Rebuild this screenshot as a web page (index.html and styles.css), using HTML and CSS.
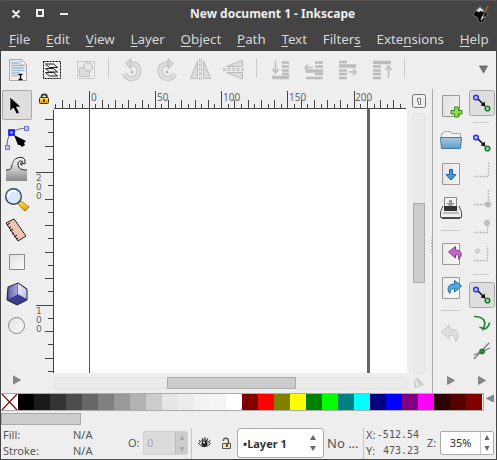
FILE: index.html
```html
<!DOCTYPE html>
<html lang="en">
<head>
<meta charset="utf-8">
<title>New document 1 - Inkscape</title>
<link rel="stylesheet" href="styles.css">
</head>
<body>
<svg class="defs" width="0" height="0" aria-hidden="true">
  <defs>
    <linearGradient id="paper" x1="0" y1="0" x2="1" y2="1"><stop offset="0" stop-color="#e2e2e2"/><stop offset="1" stop-color="#fafafa"/></linearGradient>
    <linearGradient id="gold" x1="0" y1="0" x2="0" y2="1"><stop offset="0" stop-color="#fff05a"/><stop offset="1" stop-color="#e88a00"/></linearGradient>
    <linearGradient id="blue" x1="0" y1="0" x2="0" y2="1"><stop offset="0" stop-color="#a8cae4"/><stop offset="1" stop-color="#649cc6"/></linearGradient>
    <linearGradient id="sea" x1="0" y1="0" x2="0" y2="1"><stop offset="0" stop-color="#eee"/><stop offset=".3" stop-color="#ddd"/><stop offset="1" stop-color="#888"/></linearGradient>
    <linearGradient id="cube" x1="0" y1="0" x2="1" y2="0"><stop offset="0" stop-color="#6468a8"/><stop offset="1" stop-color="#a8aadc"/></linearGradient>
    <linearGradient id="cube-side" x1="0" y1="0" x2="1" y2="1"><stop offset="0" stop-color="#f0f0ff"/><stop offset="1" stop-color="#b8bae8"/></linearGradient>
    <symbol id="snap" viewBox="0 0 20 20">
      <path d="M6 6l6 6" stroke="#111" stroke-width="1.6"/><path d="M13.500 13.500l-5-1 4-4z" fill="#111"/>
      <circle cx="4" cy="4.500" r="2.300" fill="#c4c4ff" stroke="#3434ee" stroke-width="1.600"/>
      <circle cx="15.500" cy="15.500" r="2.300" fill="#a4d8ae" stroke="#168030" stroke-width="1.600"/>
    </symbol>
    <symbol id="rot" viewBox="0 0 22 24">
      <path d="M8 6c6-1 9 2.500 9 7s-3 7.500-7.500 7.500-6-2-7-5" fill="none" stroke="#bcbcbc" stroke-width="5"/>
      <path d="M8 6c6-1 9 2.500 9 7s-3 7.500-7.500 7.500-6-2-7-5" fill="none" stroke="#dedede" stroke-width="3.400"/>
      <path d="M9 .5v10.500L3.500 5.500z" fill="#d8d8d8" stroke="#bcbcbc"/><circle cx="10" cy="14" r="1.500" fill="#bbb"/>
    </symbol>
  </defs>
</svg>
<div class="window">
  <header class="titlebar">
    <svg width="70" height="26" class="controls"><path d="M11.500 9.500l7 7m0-7l-7 7M36 9h6v6h-6z" fill="none" stroke="#eee" stroke-width="2"/><path d="M59 13h8" stroke="#eee" stroke-width="2"/></svg>
    <h1>New document 1 - Inkscape</h1>
    <svg width="18" height="20" class="logo"><path d="M8 2l7 7 1 2-4 2 1 3-4 3-4-3 1-2-5-3 1-2z" fill="#080808" stroke="#888" stroke-width=".7"/><path d="M8 3L4 7l3 1 2-1 2 1 1-1z" fill="#ddd"/><path d="M16 2l-4 8-3 6" stroke="#995d24" stroke-width="1.500" fill="none"/><path d="M10 12l-1 5 3-4z" fill="#ddd"/></svg>
  </header>
  <nav class="menubar"><span><u>F</u>ile</span><span><u>E</u>dit</span><span><u>V</u>iew</span><span><u>L</u>ayer</span><span><u>O</u>bject</span><span><u>P</u>ath</span><span><u>T</u>ext</span><span>Filter<u>s</u></span><span>Exte<u>n</u>sions</span><span><u>H</u>elp</span></nav>
  <section class="toolbar">
    <svg width="495" height="37">
      <path d="M8.500 8.500h12l5 5v16h-17z" fill="url(#paper)" stroke="#aaa"/><path d="M20 9v5h5" fill="#fff" stroke="#a8b5bf"/><path d="M10.500 12h8M10.500 14.500h12M10.500 17h13M10.500 19.500h13M10.500 22h8M10.500 24.500h7" stroke="#9fbad2" stroke-width="1.500"/><path d="M17.500 23.500h4M19.500 23.500v5M17.500 28.500h4" stroke="#000" stroke-width="1.300"/>
      <rect x="42.500" y="10.500" width="17" height="17" fill="none" stroke="#000" stroke-dasharray="2 1"/>
      <g fill="#eee" stroke="#222"><path d="M44.500 21.500h8l4 3.500h-8z"/><path d="M44.500 17.500h8l4 3.500h-8z"/><path d="M44.500 13h8l4 3.500h-8z"/></g>
      <rect x="76.500" y="10.500" width="17" height="17" fill="none" stroke="#bbb" stroke-dasharray="2 1"/><path d="M78.500 16.500h10v9h-10z" fill="#ddd" stroke="#c2c2c2"/><circle cx="87" cy="16" r="4.500" fill="#e4e4e4" stroke="#bbb"/>
      <path d="M107.500 7v20M255.500 7v20M403.500 7v20" stroke="#ccc"/>
      <use href="#rot" x="121" y="7" width="22" height="24"/>
      <g transform="translate(176 7) scale(-1 1)"><use href="#rot" width="22" height="24"/></g>
      <path d="M196.500 10v17.500h-7zM202.500 10v17.500h7z" fill="#ddd" stroke="#bbb"/><path d="M199.500 8v22" stroke="#b0b0b0" stroke-width="2.500" stroke-dasharray="3 1.500"/><path d="M199.500 8v22" stroke="#ddd" stroke-dasharray="3 1.500"/>
      <path d="M241.500 9v6.500h-16zM241.500 28v-6.500h-16z" fill="#ddd" stroke="#bbb"/><path d="M222 18.500h22" stroke="#b0b0b0" stroke-width="2.500" stroke-dasharray="3 1.500"/><path d="M222 18.500h22" stroke="#ddd" stroke-dasharray="3 1.500"/>
      <g fill="none" stroke="#bcbcbc" stroke-width="2.400">
        <path d="M281 11.500h7M281 15.500h7M281 19.500h7M281 23h7"/><path d="M271 26.500h17" stroke-width="3.500"/><path d="M274.500 10v11m-3-3l3 4 3-4" stroke-width="1.500"/>
        <path d="M314 11.500h8M314 15.500h8M314 23h8M305 27h17"/><path d="M304.500 20h17.500" stroke-width="3.500"/><path d="M312 16.500h-8m3-3l-3 3 3 3" stroke-width="1.500"/>
        <path d="M338 11h8M338 19.500h8M338 23h8M338 27h8"/><path d="M338 15h17" stroke-width="3.500"/><path d="M348 21h7m-3-3l3 3-3 3" stroke-width="1.500"/>
        <path d="M372 15.500h8M372 19.500h8M372 23h8M372 27h8"/><path d="M372 11.500h18" stroke-width="3.500"/><path d="M387.500 27V15m-3 4l3-4 3 4" stroke-width="1.500"/>
      </g>
      <path d="M478.500 15h8l-4 7z" fill="#777" stroke="#555" stroke-width=".7"/>
    </svg>
  </section>
  <main class="workspace">
    <aside class="toolbox">
      <button class="active"><svg viewBox="0 0 30 30"><path d="M10 7v14l3.500-3 3 6 3-1-3-6h4.500z" fill="#000" stroke="#fff" stroke-width=".6"/></svg></button>
      <button><svg viewBox="0 0 30 30"><path d="M7 25C7 14 12 8 26 7" fill="none" stroke="#666"/><g fill="#c8c8ff" stroke="#6668ea"><path d="M5.500 24.500h4v4h-4zM24.500 5.500h4v4h-4z"/><path d="M9 9h5v5H9z" fill="#7878ff" stroke="#0000dc" stroke-width="1.500"/></g><path d="M14 14l12 6-2 2 1 2-3 2-2-2-2 0z" fill="#000"/></svg></button>
      <button><svg viewBox="0 0 30 30"><path d="M6 28V17c7 0 5-4 7-8 3-5 10-5 12 0-3-2-7-2-7 2 0 5 4 6 9 6v11z" fill="url(#sea)"/><path d="M6 17c7 0 5-4 7-8 3-6 12-6 12-1v3l-3-1v2h-1c-1-2 1-4 2-3-2-2-5-1-5 2 0 5 4 6 9 6" fill="none" stroke="#222"/><path d="M10 14c2-1 2-5 5-7" fill="none" stroke="#aaa"/></svg></button>
      <button><svg viewBox="0 0 30 30"><path d="M21 17l8 6-4 4-7-7z" fill="url(#gold)" stroke="#b88000"/><circle cx="13.500" cy="12.500" r="7.800" fill="#d7e9fb" stroke="#36485d" stroke-width="1.400"/><path d="M8 12c0-5 5-6 8-4" stroke="#fff" stroke-width="2" fill="none"/></svg></button>
      <button><svg viewBox="0 0 30 30"><path d="M6 7l8-4 12 17-8 5z" fill="#eec4b2" stroke="#222"/><path d="M7 9l3-2M9 12l2-1M10 15l3-2M12 18l2-1M14 21l3-2M16 23l2-1" stroke="#111"/></svg></button>
      <button><svg viewBox="0 0 30 30"><path d="M9.500 7.500h15v15h-15z" fill="url(#paper)" stroke="#888"/></svg></button>
      <button><svg viewBox="0 0 30 30"><path d="M8 8l10-4 9 6v11l-10 5-10-5z" fill="#36388a" stroke="#222"/><path d="M8.500 8.500l9-4v11l-9 5z" fill="url(#cube)"/><path d="M18 4.500l8.500 6V20L18 15.500z" fill="url(#cube-side)"/><path d="M8.500 20.500l9.500-5 8.500 4.500-9.500 5z" fill="#3a3e94"/></svg></button>
      <button><svg viewBox="0 0 30 30"><circle cx="16.500" cy="15.500" r="8" fill="url(#paper)" stroke="#888"/></svg></button>
      <svg class="more" width="12" height="12"><path d="M2.500 2v8l7-4z" fill="#888" stroke="#666" stroke-width=".6"/></svg>
    </aside>
    <svg class="canvas" width="373" height="305" viewBox="34 88 373 305">
      <rect x="54" y="109" width="353" height="264" fill="#fff"/>
      <path d="M89.500 108v265" stroke="#555"/><path d="M368.500 109v264" stroke="#666" stroke-width="3"/>
      <path id="ticks" d="" fill="none" stroke="#444" shape-rendering="crispEdges"/>
      <g class="ruler-text"><text x="91" y="101">0</text><text x="157" y="101">50</text><text x="223" y="101">100</text><text x="289" y="101">150</text><text x="355" y="101">200</text></g>
      <g class="ruler-text side"><text x="36" y="181">2</text><text x="36" y="190">0</text><text x="36" y="199">0</text><text x="36" y="314">1</text><text x="36" y="323">0</text><text x="36" y="332">0</text></g>
      <path d="M41.500 98v-1c0-3.500 5.500-3.500 5.500 0v1" fill="none" stroke="#333" stroke-width="1.700"/><rect x="39.500" y="97.500" width="9" height="6" rx="1" fill="url(#gold)" stroke="#4b3000"/><path d="M44 99v3" stroke="#222" stroke-width="1.500"/>
      <path d="M54.500 377.500h352v11h-352z" fill="#ebebeb" stroke="#e2e2e2"/><path d="M167.500 377.500h128v11h-128z" fill="#ccc" stroke="#aaa"/>
    </svg>
    <svg class="vscroll" width="26" height="305" viewBox="407 88 26 305">
      <rect x="412.500" y="94.500" width="13" height="13" rx="2" fill="#eee" stroke="#777"/><path d="M417.500 98.500h3v6h-2v-3h-1z" fill="#fff" stroke="#777"/>
      <path d="M413.500 113.500h11v259h-11z" fill="#ebebeb" stroke="#e2e2e2"/><path d="M413.500 203.500h11v79h-11z" fill="#ccc" stroke="#aaa"/>
      <path d="M415 378l3 0 6 7-8 3-2-1z" fill="#c7ccc8"/><path d="M415 378l1 9 4-2z" fill="#e4ebe6"/>
      <path d="M431.500 237v16" stroke="#aaa" stroke-dasharray="1 2"/><path d="M432.500 89v304" stroke="#aaa"/>
    </svg>
    <svg class="commands" width="34" height="305" viewBox="433 88 34 305">
      <g fill="url(#paper)" stroke="#999"><path d="M442.500 95.500h17v21h-17zM442.500 163.500h17v21h-17zM442.500 243.500h17v21h-17zM442.500 277.500h17v21h-17z"/></g>
      <path d="M454.500 107h4v3.500h3.500v3.500h-3.500v3h-4v-3H451v-3.500h3.500z" fill="#91db42" stroke="#3d8920"/>
      <path d="M441.500 148v-14.500h2l1-2h6l1 2h9V148" fill="#f5f5f5" stroke="#aaa"/><path d="M440.500 137.500h21l-1 11h-19z" fill="url(#blue)" stroke="#427aa4"/>
      <path d="M449.500 169.500h3v5h3.500l-5 5.500-5-5.500h3.500z" fill="#4098dc" stroke="#2260a0"/>
      <path d="M444.500 207v-9.500h12v9.500" fill="#f2f2f2" stroke="#888"/><path d="M449 200h3v3h3l-4.500 4-4.500-4h3z" fill="#999"/><path d="M443 206l-2.500 6v5.500h21V212l-2.500-6" fill="#eee" stroke="#555"/><path d="M444 206h13v5h-13z" fill="#333"/><path d="M443 213h16" stroke="#888"/><path d="M442 218.500h18" stroke="#444"/>
      <path d="M441 230.500h19M441 310.500h19" stroke="#c8c8c8"/>
      <path d="M448.500 252l7-5.500v3.500c7 0 7 6 3 9.500 1-4-1-5-3-5v3.500z" fill="#c36ac3" stroke="#873787"/>
      <path d="M461.500 286l-7-5.500v3.500c-7 0-8 6-4.500 9.500 0-4 2-5 4.500-5v3.500z" fill="#4fa9dd" stroke="#236ba5"/>
      <path d="M441.500 332l8-7v4c10 0 10 8 6 13 0-5-2-7-6-7v4z" fill="#dedede" stroke="#c8c8c8"/>
      <path d="M447.500 376.500v8l7-4z" fill="#888" stroke="#666" stroke-width=".6"/>
    </svg>
    <svg class="snapbar" width="29" height="305" viewBox="467 88 29 305">
      <g fill="#dedede" stroke="#aaa"><rect x="469.500" y="90.500" width="25" height="25" rx="2"/><rect x="469.500" y="282.500" width="25" height="25" rx="2"/></g>
      <use href="#snap" x="472" y="93" width="20" height="20"/><use href="#snap" x="472" y="133" width="20" height="20"/><use href="#snap" x="472" y="285" width="20" height="20"/>
      <path d="M473 122.500h16M473 274.500h16" stroke="#ccc"/>
      <g fill="none" stroke="#bcbcbc" stroke-width="1.300" stroke-dasharray="2 1"><path d="M474 176.500h14.500V162M474 204.500h14.500V190M474 232.500h13.500V219M474 260.500h13.500V246"/></g>
      <g fill="#bbb"><circle cx="488" cy="204.500" r="3"/><circle cx="487" cy="223" r="3"/><circle cx="477.500" cy="251" r="2" fill="#ddd" stroke="#bbb"/></g>
      <path d="M474 316.500c10 0 13 5 9 13-1-1-1-2-2-2 4 3 8 0 8.500-5" fill="none" stroke="#218536" stroke-width="1.700"/>
      <path d="M474 355l16-7M474 359l15-16" stroke="#777" stroke-width="1.300"/><circle cx="482" cy="351.500" r="2.500" fill="#30844b" stroke="#176b2c"/>
      <path d="M478.500 376.500v8l7-4z" fill="#888" stroke="#666" stroke-width=".6"/>
    </svg>
  </main>
  <section class="palette">
    <div class="swatches"><svg width="17" height="16"><path d="M0 0h17v16H0z" fill="#fff"/><path d="M1 0l15 16M16 0L1 16" stroke="#7c1016" stroke-width="1.300"/></svg><i class="c0"></i><i class="c1"></i><i class="c2"></i><i class="c3"></i><i class="c4"></i><i class="c5"></i><i class="c6"></i><i class="c7"></i><i class="c8"></i><i class="c9"></i><i class="c10"></i><i class="c11"></i><i class="c12"></i><i class="c13"></i><i class="maroon"></i><i class="red"></i><i class="olive"></i><i class="yellow"></i><i class="green"></i><i class="lime"></i><i class="teal"></i><i class="aqua"></i><i class="navy"></i><i class="blue"></i><i class="purple"></i><i class="fuchsia"></i><i class="r1"></i><i class="r2"></i><i class="r3"></i></div>
    <svg width="11" height="16"><path d="M9.500 2v7l-7-3.500z" fill="#888" stroke="#666" stroke-width=".6"/></svg>
  </section>
  <div class="palette-scroll"><div></div></div>
  <footer class="status">
    <div class="style-labels"><span>Fill:</span><span>Stroke:</span></div>
    <div class="style-values"><span>N/A</span><span>N/A</span></div>
    <span class="opacity">O:</span>
    <div class="spin disabled"><span>0</span><svg width="12" height="22"><path d="M3.500 8l2.500-5 2.500 5zM3.500 15l2.500 5 2.500-5z"/></svg></div>
    <div class="rule"></div>
    <svg class="eye" width="13" height="12"><path d="M.5 6.500Q6-1 12.500 6.500 6 13 .5 6.500z" fill="#e5e5e5" stroke="#333"/><circle cx="6.500" cy="6.500" r="3" fill="#222"/><circle cx="6" cy="5.500" r="1" fill="#fff"/><path d="M1 3l2 2M4 1l1 2M7 0v3M10 1L9 3M12.500 3l-2 2" stroke="#333"/></svg>
    <svg class="lock" width="12" height="13"><path d="M2.500 4V3c1-3 5-2 5 1v2" fill="none" stroke="#444" stroke-width="1.300"/><path d="M1.500 6.500h8v5h-8z" fill="#eee7b0" stroke="#555"/><path d="M6 7v3" stroke="#222" stroke-width="1.500"/></svg>
    <div class="layer"><b>•Layer 1</b><svg width="10" height="18"><path d="M2 6l3-5 3 5zM2 12l3 5 3-5z"/></svg></div>
    <span class="message">No ...</span>
    <div class="rule"></div>
    <div class="axes"><span>X:</span><span>Y:</span></div>
    <div class="coords"><span>-512.54</span><span>473.23</span></div>
    <span class="zoom-label">Z:</span>
    <div class="spin zoom"><span>35%</span><svg width="12" height="22"><path d="M3.500 8L6 3l2.500 5zM3.500 14L6 19l2.500-5z"/></svg></div>
  </footer>
</div>
<script src="script.js"></script>
</body>
</html>
```
FILE: styles.css
```css
* { box-sizing: border-box; }
body { margin: 0; background: #444; font-family: "Noto Sans", sans-serif; }
svg { display: block; flex: none; }
.defs { position: absolute; }
.window { width: 497px; height: 460px; padding: 0 1px 1px; background: #444; overflow: hidden; }
.window > * { background: #eee; }
.titlebar { height: 26px; background: #444; display: flex; align-items: center; border-top: 1px solid #555; }
.titlebar h1 { margin: 0 0 0 119px; width: 166px; font-size: 12px; line-height: 24px; font-weight: 700; color: #eee; white-space: nowrap; }
.logo { margin-left: 116px; }
.menubar { height: 25px; background: #444; color: #d8d8d8; display: flex; gap: 15.800px; padding-left: 8px; font-size: 13.300px; line-height: 27px; white-space: nowrap; }
.menubar u { text-underline-offset: 2px; text-decoration-thickness: 1px; text-decoration-skip-ink: none; }
.toolbar { height: 37px; }
.workspace { display: flex; height: 305px; }
.toolbox { width: 33px; padding: 2px 0 0 1px; }
.toolbox button { width: 30px; height: 30px; margin: 0 0 1.450px; padding: 0; border: 0; background: none; display: block; }
.toolbox button svg { width: 30px; height: 30px; margin-left: -2px; }
.toolbox .active { background: #dedede; box-shadow: inset 0 0 0 1px #aaa; border-radius: 2px; }
.toolbox .more { margin: 34px 0 0 9px; }
.ruler-text { font-size: 10px; fill: #666; }
.side { font: 9.500px "DejaVu Sans", sans-serif; font-size: 9px; }
.palette { height: 18px; display: flex; }
.swatches { height: 18px; width: 483px; border: 1px solid #aaa; border-left: 0; display: flex; }
.swatches > * { width: 16px; flex: 0 0 16px; }
.swatches svg { width: 17px; flex-basis: 17px; }
.c0 { background: #000; } .c1 { background: #1a1a1a; } .c2 { background: #333; }
.c3 { background: #4d4d4d; } .c4 { background: #666; } .c5 { background: #808080; }
.c6 { background: #999; } .c7 { background: #b3b3b3; } .c8 { background: #ccc; }
.c9 { background: #e6e6e6; } .c10 { background: #ececec; } .c11 { background: #f2f2f2; }
.c12 { background: #f4f4f4; } .c13 { background: #fff; }
.maroon { background: #800000; } .red { background: #f00; } .olive { background: #808000; }
.yellow { background: #ff0; } .green { background: #008000; } .lime { background: #0f0; }
.teal { background: #008080; } .aqua { background: #0ff; } .navy { background: #000080; }
.blue { background: #00f; } .purple { background: #800080; } .fuchsia { background: #f0f; }
.r1 { background: #2b0000; } .r2 { background: #500; } .r3 { background: #800000; }
.palette-scroll { height: 16px; padding-top: 2px; }
.palette-scroll div { width: 80px; height: 12px; background: #ccc; border: 1px solid #aaa; }
.status { height: 32px; display: flex; align-items: center; color: #555; font-size: 11px; white-space: nowrap; }
.status span { display: block; line-height: 16px; }
.style-labels { width: 72px; padding-left: 2px; }
.style-values { width: 55px; }
.opacity { width: 15px; }
.spin { display: flex; align-items: center; height: 24px; border-radius: 2px; }
.disabled { width: 45px; background: #dcdcdc; color: #aaa; border: 1px solid #d0d0d0; }
.disabled span { padding-left: 3px; width: 32px; }
.disabled svg { background: #ccc; border-left: 1px solid #bbb; }
.disabled path { fill: #aaa; }
.rule { width: 1px; height: 31px; background: #c4c4c4; flex: none; }
.disabled + .rule { margin-left: 3px; }
.eye { margin-left: 6px; }
.lock { margin-left: 10px; }
.layer { width: 87px; height: 30px; margin-left: 4px; border: 1px solid #aaa; border-radius: 3px; background: #fff; display: flex; align-items: center; justify-content: space-between; padding: 0 5px; color: #333; }
.layer path, .zoom path { fill: #666; }
.message { margin-left: 3px; width: 36px; font-size: 13px; }
.axes { width: 12px; padding-left: 2px; }
.coords { width: 43px; flex: none; font: 10px "DejaVu Sans Mono", monospace; text-align: right; }
.status .coords span, .status .axes span { line-height: 16px; }
.zoom-label { width: 13px; margin-left: 8px; }
.zoom { width: 54px; flex: none; border: 1px solid #aaa; background: #fff; color: #333; }
.zoom span { width: 41px; text-align: center; border-right: 1px solid #ccc; line-height: 22px; }
```
FILE: script.js
```js
// Major, medium and minor divisions for the two document rulers.
let d = 'M54 108.5H406M53.500 110V373';
for (let i = -5; i < 48; i++) {
  const x = Math.floor(89 + i * 6.63) + .5;
  const y = i % 10 === 0 ? 91 : i % 2 === 0 ? 100 : 104;
  d += `M${x} ${y}V108`;
}
for (let i = -4; i <= 15; i++) {
  const y = Math.floor(172.6 + i * 13.26) + .5;
  const x = i % 10 === 0 ? 36 : i % 2 === 0 ? 45 : 48;
  d += `M${x} ${y}H54`;
}
document.getElementById('ticks').setAttribute('d', d);
```
